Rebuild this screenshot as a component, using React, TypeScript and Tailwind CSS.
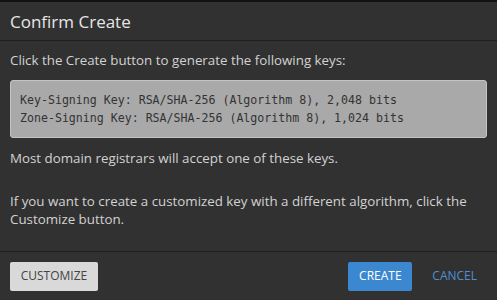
export default function App() {
  return (
    <div className="h-[300px] w-[497px] overflow-hidden bg-[#111] pt-[2px] font-['Open_Sans',sans-serif]">
      <div className="flex h-[298px] flex-col bg-[#313131]">
        {/* Header */}
        <div className="flex h-[39px] items-center border-b border-[#1e1e1e] px-[10px]">
          <h2 className="text-[17px] leading-none text-[#e6e6e6]">Confirm Create</h2>
        </div>

        {/* Body */}
        <div className="flex-1 px-[10px] pt-[10px] text-[13.33px] leading-[18px] text-[#d2d2d2]">
          <p>Click the Create button to generate the following keys:</p>
          <pre className="mt-[11px] rounded-[3px] border border-[#c4c4c4] bg-[#a9a9a9] px-[9px] py-[10px] font-['DejaVu_Sans_Mono',monospace] text-[11.6px] leading-[18px] text-[#333]">
            {"Key-Signing Key: RSA/SHA-256 (Algorithm 8), 2,048 bits\nZone-Signing Key: RSA/SHA-256 (Algorithm 8), 1,024 bits"}
          </pre>
          <p className="mt-[11px]">Most domain registrars will accept one of these keys.</p>
          <p className="mt-[25px]">
            If you want to create a customized key with a different algorithm, click the Customize button.
          </p>
        </div>

        {/* Footer */}
        <div className="flex h-[49px] items-center border-t border-[#1e1e1e] px-[10px]">
          <button className="h-[29px] w-[88px] rounded-[2px] bg-[#d9d9d9] text-[12px] text-[#444]">
            CUSTOMIZE
          </button>
          <div className="ml-auto flex items-center gap-[20px] pr-[10px]">
            <button className="h-[29px] w-[64px] rounded-[2px] bg-[#3b88d1] text-[12px] text-white">
              CREATE
            </button>
            <button className="text-[12px] text-[#4f8fd4]">CANCEL</button>
          </div>
        </div>
      </div>
    </div>
  );
}
